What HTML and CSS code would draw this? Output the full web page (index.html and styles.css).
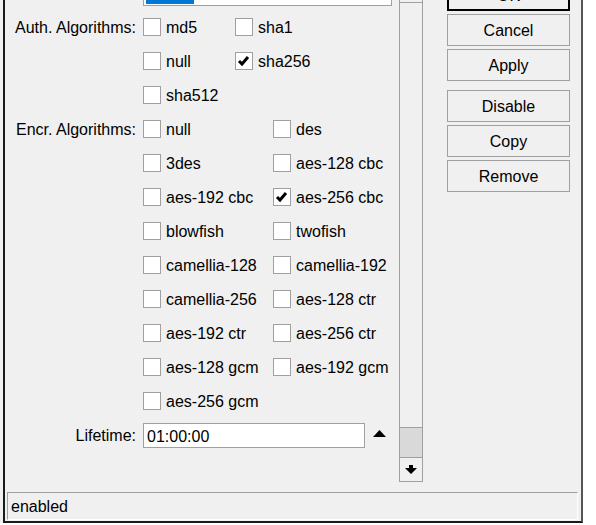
FILE: index.html
```html
<!DOCTYPE html>
<html lang="en">
  <head>
    <meta charset="UTF-8" />
    <meta name="viewport" content="width=device-width, initial-scale=1.0" />
    <title>IPsec Proposal</title>
    <link rel="stylesheet" href="styles.css">
  </head>
  <body>
    <div class="frame">
      <div class="window">
        <div class="main">
          <div class="form">
            <div class="top-field"><div class="progress"></div></div>

            <div class="label">Auth. Algorithms:</div>
            <div class="opts auth">
              <label class="opt"><span class="box"></span><span class="txt">md5</span></label>
              <label class="opt"><span class="box"></span><span class="txt">sha1</span></label>
              <label class="opt"><span class="box"></span><span class="txt">null</span></label>
              <label class="opt"><span class="box"><svg width="16" height="16" viewBox="0 0 16 16"><polyline points="3,8 6,11 12,4" fill="none" stroke="#000" stroke-width="3"/></svg></span><span class="txt">sha256</span></label>
              <label class="opt"><span class="box"></span><span class="txt">sha512</span></label>
            </div>

            <div class="label">Encr. Algorithms:</div>
            <div class="opts encr">
              <label class="opt"><span class="box"></span><span class="txt">null</span></label>
              <label class="opt"><span class="box"></span><span class="txt">des</span></label>
              <label class="opt"><span class="box"></span><span class="txt">3des</span></label>
              <label class="opt"><span class="box"></span><span class="txt">aes-128 cbc</span></label>
              <label class="opt"><span class="box"></span><span class="txt">aes-192 cbc</span></label>
              <label class="opt"><span class="box"><svg width="16" height="16" viewBox="0 0 16 16"><polyline points="3,8 6,11 12,4" fill="none" stroke="#000" stroke-width="3"/></svg></span><span class="txt">aes-256 cbc</span></label>
              <label class="opt"><span class="box"></span><span class="txt">blowfish</span></label>
              <label class="opt"><span class="box"></span><span class="txt">twofish</span></label>
              <label class="opt"><span class="box"></span><span class="txt">camellia-128</span></label>
              <label class="opt"><span class="box"></span><span class="txt">camellia-192</span></label>
              <label class="opt"><span class="box"></span><span class="txt">camellia-256</span></label>
              <label class="opt"><span class="box"></span><span class="txt">aes-128 ctr</span></label>
              <label class="opt"><span class="box"></span><span class="txt">aes-192 ctr</span></label>
              <label class="opt"><span class="box"></span><span class="txt">aes-256 ctr</span></label>
              <label class="opt"><span class="box"></span><span class="txt">aes-128 gcm</span></label>
              <label class="opt"><span class="box"></span><span class="txt">aes-192 gcm</span></label>
              <label class="opt"><span class="box"></span><span class="txt">aes-256 gcm</span></label>
            </div>

            <div class="label">Lifetime:</div>
            <div class="lifetime">
              <div class="input">01:00:00</div>
              <svg class="up" width="13" height="7" viewBox="0 0 13 7"><polygon points="6.5,0 13,7 0,7" fill="#000"/></svg>
            </div>
          </div>

          <div class="scrollbar">
            <div class="sb-up"></div>
            <div class="sb-track"></div>
            <div class="sb-thumb"></div>
            <div class="sb-down">
              <svg width="12" height="9" viewBox="0 0 12 9"><polygon points="4,0 8,0 8,3 12,3 6,9 0,3 4,3" fill="#000"/></svg>
            </div>
          </div>

          <div class="buttons">
            <div class="btn default">OK</div>
            <div class="btn">Cancel</div>
            <div class="btn">Apply</div>
            <div class="btn spaced">Disable</div>
            <div class="btn">Copy</div>
            <div class="btn">Remove</div>
          </div>
        </div>
        <div class="status">enabled</div>
      </div>
    </div>
  </body>
</html>
```

FILE: styles.css
```css
body {
  margin: 0;
  background-color: #ffffff;
  font-family: "Liberation Sans", Arial, sans-serif;
  font-size: 16px;
  color: #000;
}
.frame {
  width: 583px;
  height: 523px;
  background-color: #f0f0f0;
  padding-left: 3px;
  box-sizing: border-box;
}
.window {
  width: 580px;
  height: 523px;
  box-sizing: border-box;
  border: 2px solid #1a1a1a;
  border-top: none;
  border-right-color: #555;
  overflow: hidden;
  background-color: #f0f0f0;
}
.main {
  display: flex;
  height: 492px;
}
.form {
  width: 394px;
  display: grid;
  grid-template-columns: 131px 1fr;
  column-gap: 7px;
  align-content: start;
}
.top-field {
  grid-column: 2;
  width: 249px;
  height: 22px;
  margin-top: -16px;
  margin-bottom: 4px;
  box-sizing: border-box;
  border: 1px solid #a0a0a0;
  background-color: #fff;
  padding: 0 2px 1px;
  display: flex;
  align-items: flex-end;
}
.progress {
  width: 48px;
  height: 18px;
  background-color: #0078d7;
}
.label {
  grid-column: 1;
  text-align: right;
  line-height: 34px;
  height: 34px;
  padding-top: 1px;
  box-sizing: border-box;
  white-space: nowrap;
}
.opts {
  display: grid;
  grid-auto-rows: 34px;
}
.auth {
  grid-template-columns: 92px 92px;
}
.encr {
  grid-template-columns: 130px 130px;
}
.opt {
  display: flex;
  align-items: center;
  white-space: nowrap;
}
.txt {
  margin-top: 2px;
}
.box {
  width: 18px;
  height: 18px;
  box-sizing: border-box;
  border: 1px solid #a0a0a0;
  background-color: #fff;
  margin-right: 5px;
  display: flex;
}
.lifetime {
  display: flex;
  align-items: center;
  height: 34px;
}
.input {
  width: 222px;
  height: 25px;
  box-sizing: border-box;
  border: 1px solid #a0a0a0;
  background-color: #fff;
  padding: 1px 0 0 3px;
  line-height: 23px;
}
.up {
  margin-left: 8px;
  margin-top: -3px;
}
.scrollbar {
  width: 24px;
  height: 482px;
  box-sizing: border-box;
  border: 1px solid #a0a0a0;
  border-top: none;
  display: flex;
  flex-direction: column;
  background-color: #f0f0f0;
}
.sb-up {
  height: 2px;
  border-bottom: 1px solid #a0a0a0;
}
.sb-track {
  flex: 1;
}
.sb-thumb {
  height: 29px;
  border-top: 1px solid #a0a0a0;
  background-color: #d9d9d9;
}
.sb-down {
  height: 23px;
  border-top: 1px solid #a0a0a0;
  display: flex;
  align-items: center;
  justify-content: center;
}
.buttons {
  margin-left: 24px;
  width: 123px;
  display: flex;
  flex-direction: column;
  gap: 3px;
}
.btn {
  height: 32px;
  box-sizing: border-box;
  border: 1px solid #a0a0a0;
  padding-top: 2px;
  display: flex;
  align-items: center;
  justify-content: center;
}
.btn.default {
  margin-top: -21px;
  border: 2px solid #000;
}
.btn.spaced {
  margin-top: 6px;
}
.status {
  margin-left: 2px;
  width: 571px;
  height: 28px;
  box-sizing: border-box;
  border: 1px solid #a0a0a0;
  border-right-color: #fff;
  border-bottom-color: #fff;
  padding: 1px 0 0 3px;
  line-height: 26px;
}
```
